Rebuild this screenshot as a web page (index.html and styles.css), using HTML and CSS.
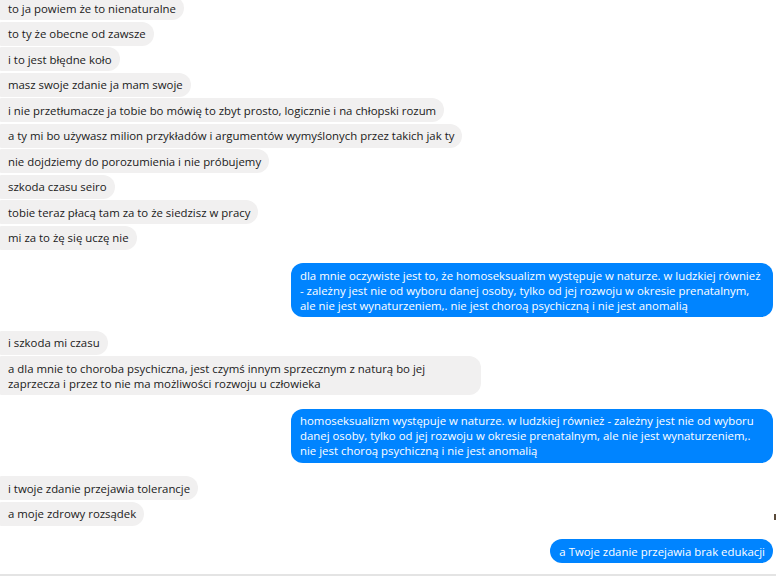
FILE: index.html
```html
<!DOCTYPE html>
<html lang="pl">
<head>
<meta charset="utf-8">
<link rel="stylesheet" href="styles.css">
</head>
<body>
<div class="window">
  <div class="chat">
    <div class="group in">
      <div class="msg">to ja powiem że to nienaturalne</div>
      <div class="msg">to ty że obecne od zawsze</div>
      <div class="msg">i to jest błędne koło</div>
      <div class="msg">masz swoje zdanie ja mam swoje</div>
      <div class="msg">i nie przetłumacze ja tobie bo mówię to zbyt prosto, logicznie i na chłopski rozum</div>
      <div class="msg">a ty mi bo używasz milion przykładów i argumentów wymyślonych przez takich jak ty</div>
      <div class="msg">nie dojdziemy do porozumienia i nie próbujemy</div>
      <div class="msg">szkoda czasu seiro</div>
      <div class="msg">tobie teraz płacą tam za to że siedzisz w pracy</div>
      <div class="msg">mi za to żę się uczę nie</div>
    </div>
    <div class="group out">
      <div class="msg">dla mnie oczywiste jest to, że homoseksualizm występuje w naturze. w ludzkiej również - zależny jest nie od wyboru danej osoby, tylko od jej rozwoju w okresie prenatalnym, ale nie jest wynaturzeniem,. nie jest choroą psychiczną i nie jest anomalią</div>
    </div>
    <div class="group in">
      <div class="msg">i szkoda mi czasu</div>
      <div class="msg">a dla mnie to choroba psychiczna, jest czymś innym sprzecznym z naturą bo jej zaprzecza i przez to nie ma możliwości rozwoju u człowieka</div>
    </div>
    <div class="group out">
      <div class="msg">homoseksualizm występuje w naturze. w ludzkiej również - zależny jest nie od wyboru danej osoby, tylko od jej rozwoju w okresie prenatalnym, ale nie jest wynaturzeniem,. nie jest choroą psychiczną i nie jest anomalią</div>
    </div>
    <div class="group in">
      <div class="msg">i twoje zdanie przejawia tolerancje</div>
      <div class="msg">a moje zdrowy rozsądek</div>
    </div>
    <div class="group out">
      <div class="msg">a Twoje zdanie przejawia brak edukacji</div>
    </div>
  </div>
  <div class="seen"></div>
  <div class="divider"></div>
</div>
</body>
</html>
```

FILE: styles.css
```css
html, body {
  margin: 0;
  padding: 0;
  background: #ffffff;
}

.window {
  position: relative;
  width: 776px;
  height: 580px;
  overflow: hidden;
  font-family: "Segoe UI", "Open Sans", "Noto Sans", sans-serif;
  font-size: 11.4px;
  line-height: 15px;
}

.chat {
  height: 574px;
  box-sizing: border-box;
  padding: 0 3px 0 0;
  display: flex;
  flex-direction: column;
  gap: 13.5px;
  overflow: hidden;
}

.group {
  display: flex;
  flex-direction: column;
  gap: 1.5px;
}

.group:first-child {
  margin-top: -4px;
}

.group.in {
  align-items: flex-start;
}

.group.out {
  align-items: flex-end;
}

.msg {
  max-width: 465px;
  padding: 4.5px 8px 4.5px 8px;
  border-radius: 12px;
  word-wrap: break-word;
}

.in .msg {
  background: #f1f0f0;
  color: #1a1a1a;
  border-radius: 1px 12px 12px 1px;
}

.out .msg {
  background: #0084ff;
  color: #ffffff;
  padding-left: 9px;
  border-radius: 12px;
}

.divider {
  height: 2px;
  background: #e4e4e4;
}

.seen {
  position: absolute;
  right: 0;
  top: 514px;
  width: 2px;
  height: 6px;
  background: #5a4a3a;
}
```
